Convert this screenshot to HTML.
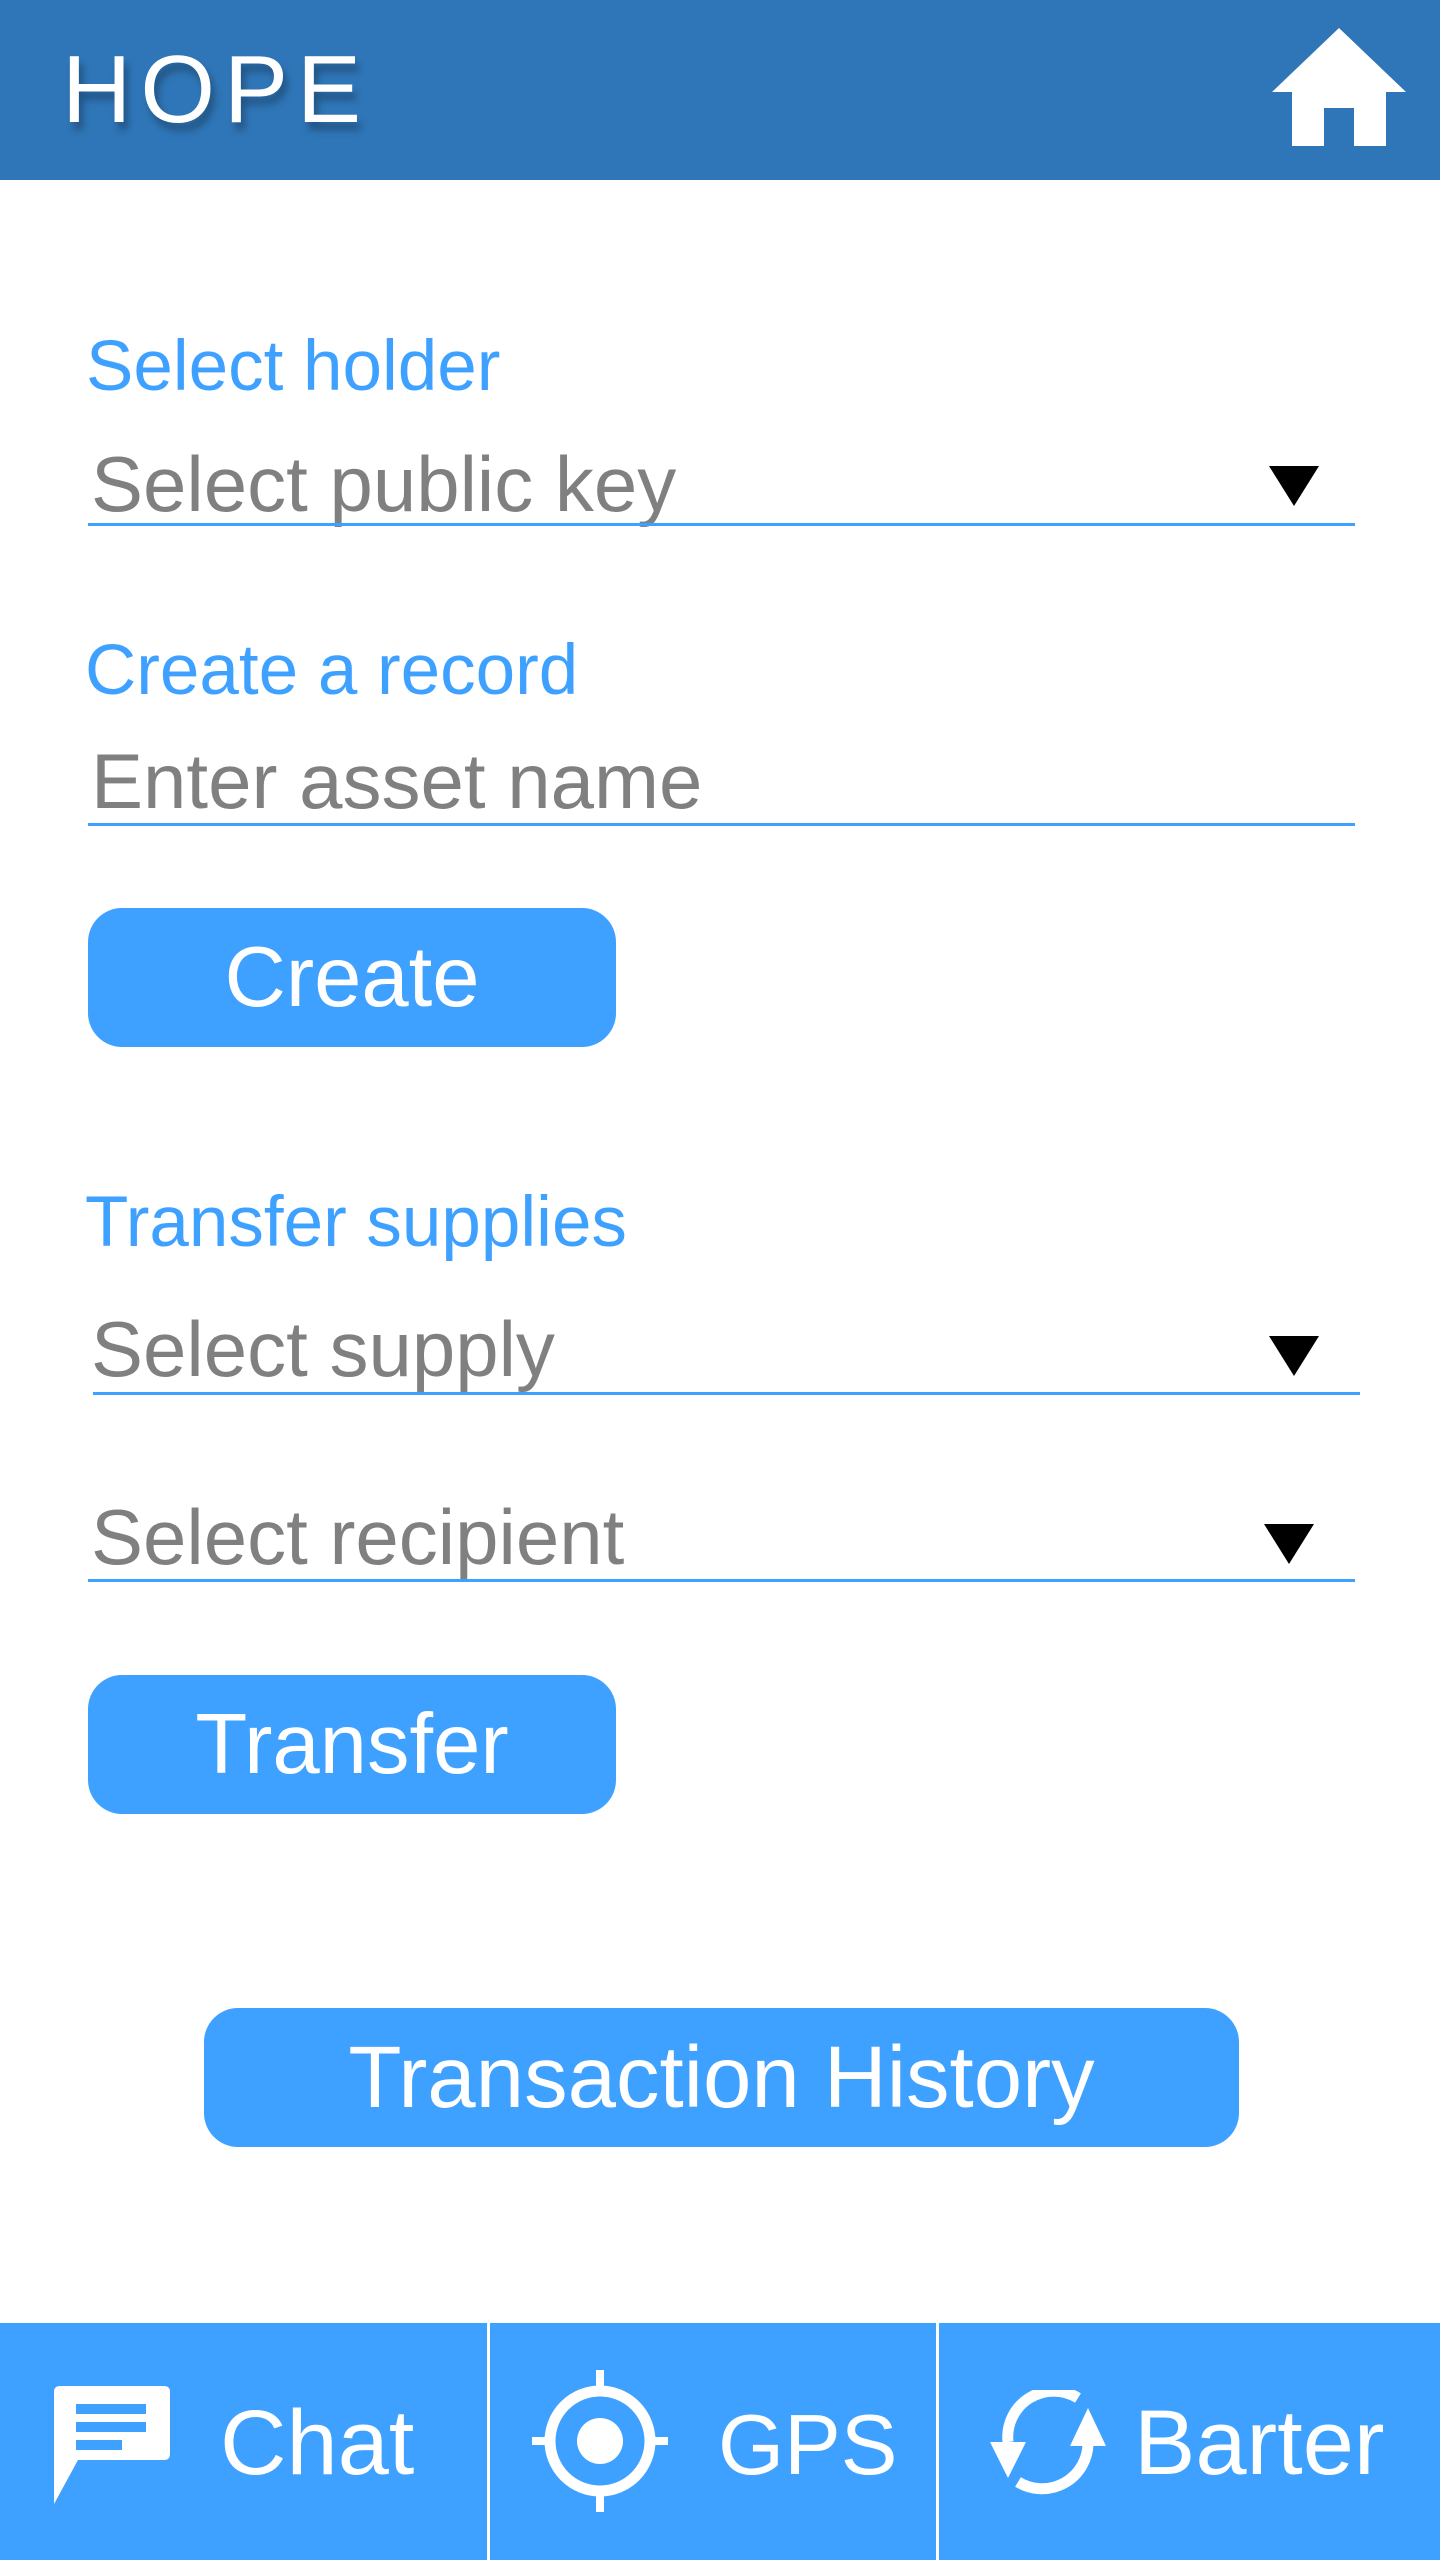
<!DOCTYPE html>
<html><head><meta charset="utf-8"><style>
*{margin:0;padding:0;box-sizing:border-box}
body{width:1440px;height:2560px;position:relative;background:#fff;font-family:"Liberation Sans",sans-serif;overflow:hidden}
.a{position:absolute;line-height:1;white-space:nowrap}
.lbl{color:#3fa1ff;font-size:71px}
.ph{color:#808080;font-size:78px}
.ul{position:absolute;height:3px;background:#3fa1ff}
.btn{position:absolute;background:#3fa1ff;border-radius:34px;color:#fff;display:flex;align-items:center;justify-content:center;font-size:85px}
.tri{position:absolute;width:0;height:0;border-left:25px solid transparent;border-right:25px solid transparent;border-top:40px solid #000}
.bt{position:absolute;color:#fff;font-size:92px;line-height:1}
</style></head><body>
<div style="position:absolute;left:0;top:0;width:1440px;height:180px;background:#2f76b8"></div>
<div class="a" style="left:62px;top:42px;color:#fff;font-size:96px;letter-spacing:9px;text-shadow:4px 8px 8px rgba(0,0,0,.3)">HOPE</div>
<svg style="position:absolute;left:1268px;top:28px" width="142" height="122" viewBox="0 0 142 122"><path d="M71 0 L138 64 L118 64 L118 118 L86 118 L86 80 L56 80 L56 118 L24 118 L24 64 L4 64 Z" fill="#fff"/></svg>

<div class="a lbl" style="left:86px;top:331px">Select holder</div>
<div class="a ph" style="left:91px;top:445px">Select public key</div>
<div class="ul" style="left:88px;top:523px;width:1267px"></div>
<div class="tri" style="left:1269px;top:466px"></div>

<div class="a lbl" style="left:85px;top:635px">Create a record</div>
<div class="a ph" style="left:91px;top:742px">Enter asset name</div>
<div class="ul" style="left:88px;top:823px;width:1267px"></div>
<div class="btn" style="left:88px;top:908px;width:528px;height:139px">Create</div>

<div class="a lbl" style="left:85px;top:1187px">Transfer supplies</div>
<div class="a ph" style="left:91px;top:1310px">Select supply</div>
<div class="ul" style="left:93px;top:1392px;width:1267px"></div>
<div class="tri" style="left:1269px;top:1336px"></div>

<div class="a ph" style="left:91px;top:1498px">Select recipient</div>
<div class="ul" style="left:88px;top:1579px;width:1267px"></div>
<div class="tri" style="left:1264px;top:1524px"></div>
<div class="btn" style="left:88px;top:1675px;width:528px;height:139px">Transfer</div>

<div class="btn" style="left:204px;top:2008px;width:1035px;height:139px;font-size:87px">Transaction History</div>

<div style="position:absolute;left:0;top:2323px;width:1440px;height:237px;background:#3fa1ff"></div>
<div style="position:absolute;left:487px;top:2323px;width:3px;height:237px;background:#fff"></div>
<div style="position:absolute;left:936px;top:2323px;width:3px;height:237px;background:#fff"></div>

<svg style="position:absolute;left:54px;top:2386px" width="118" height="118" viewBox="0 0 118 118"><path d="M6 0 H110 Q116 0 116 6 V68 Q116 74 110 74 H24 L0 118 V6 Q0 0 6 0 Z" fill="#fff"/><rect x="22" y="18" width="70" height="10" fill="#3fa1ff"/><rect x="22" y="36" width="70" height="10" fill="#3fa1ff"/><rect x="22" y="54" width="46" height="10" fill="#3fa1ff"/></svg>
<div class="bt" style="left:220px;top:2397px">Chat</div>

<svg style="position:absolute;left:530px;top:2370px" width="140" height="142" viewBox="0 0 140 142"><circle cx="70" cy="71" r="50" fill="none" stroke="#fff" stroke-width="11"/><circle cx="70" cy="71" r="23" fill="#fff"/><rect x="66" y="0" width="8" height="24" fill="#fff"/><rect x="66" y="118" width="8" height="24" fill="#fff"/><rect x="2" y="67" width="20" height="8" fill="#fff"/><rect x="118" y="67" width="20" height="8" fill="#fff"/></svg>
<div class="bt" style="left:718px;top:2403px;font-size:85px">GPS</div>

<svg style="position:absolute;left:982px;top:2390px" width="132" height="106" viewBox="0 0 132 106"><path d="M96 8 A46 46 0 0 0 26 52" fill="none" stroke="#fff" stroke-width="11"/><path d="M8 52 L44 52 L26 88 Z" fill="#fff"/><path d="M36 92 A46 46 0 0 0 106 54" fill="none" stroke="#fff" stroke-width="11"/><path d="M88 56 L124 56 L106 18 Z" fill="#fff"/></svg>
<div class="bt" style="left:1134px;top:2397px">Barter</div>
</body></html>
